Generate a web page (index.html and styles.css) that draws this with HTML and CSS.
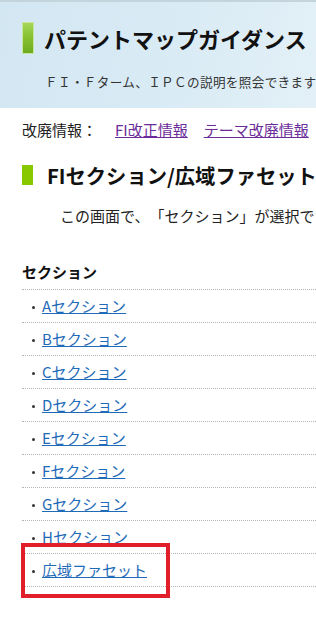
FILE: index.html
```html
<!DOCTYPE html>
<html lang="ja">
<head>
<meta charset="utf-8">
<title>パテントマップガイダンス</title>
<link rel="stylesheet" href="styles.css">
</head>
<body>
<header class="hdr">
  <div class="hdr-title">
    <span class="hdr-icon"></span>
    <h1>パテントマップガイダンス</h1>
  </div>
  <p class="hdr-sub">ＦＩ・Ｆターム、ＩＰＣの説明を照会できます</p>
</header>
<main class="content">
  <p class="info">改廃情報：<a class="visited" href="#">FI改正情報</a><a class="visited" href="#">テーマ改廃情報</a></p>
  <h2 class="heading"><span class="heading-bar"></span>FIセクション/広域ファセット</h2>
  <p class="lead">この画面で、「セクション」が選択できます。</p>
  <h3 class="label">セクション</h3>
  <ul class="list">
    <li><a href="#">Aセクション</a></li>
    <li><a href="#">Bセクション</a></li>
    <li><a href="#">Cセクション</a></li>
    <li><a href="#">Dセクション</a></li>
    <li><a href="#">Eセクション</a></li>
    <li><a href="#">Fセクション</a></li>
    <li><a href="#">Gセクション</a></li>
    <li><a href="#">Hセクション</a></li>
    <li class="marked"><a href="#">広域ファセット</a><span class="mark"></span></li>
  </ul>
</main>
</body>
</html>
```

FILE: styles.css
```css
html {
  margin: 0;
  padding: 0;
  overflow: hidden;
  background: #fff;
}
body {
  margin: 0;
  padding: 0;
  min-height: 618px;
  font-family: "Noto Sans CJK JP", "Noto Sans", sans-serif;
  color: #222;
  width: 316px;
  text-spacing-trim: space-all;
}
.hdr {
  height: 108px;
  box-sizing: border-box;
  border-top: 2px solid #c4d4dd;
  background: linear-gradient(100deg, #d3e7f2 0%, #d9ebf5 55%, #e3f0f7 100%);
  padding: 20px 0 0 22px;
  white-space: nowrap;
}
.hdr-title {
  display: flex;
  align-items: center;
  gap: 10px;
  height: 32px;
}
.hdr-icon {
  flex: none;
  width: 10px;
  height: 30px;
  border: 1px solid #c9e79a;
  background: linear-gradient(180deg, #a6d65a 0%, #86c232 45%, #6eab1f 100%);
}
.hdr-title h1 {
  margin: 0;
  font-size: 22px;
  line-height: 32px;
  font-weight: 700;
  color: #111;
}
.hdr-sub {
  margin: 18px 0 0 23px;
  font-size: 12.6px;
  line-height: 20px;
  letter-spacing: 0.35px;
  color: #333;
}
.content {
  padding: 0 0 0 22px;
  white-space: nowrap;
}
.info {
  margin: 11px 0 0 0;
  font-size: 15px;
  line-height: 22px;
  color: #222;
}
.info a {
  margin-left: 16px;
}
.info a:first-child {
  margin-left: 18px;
}
.visited {
  color: #6b2c99;
}
.heading {
  margin: 21px 0 0 0;
  display: flex;
  align-items: center;
  gap: 14px;
  font-size: 20.3px;
  line-height: 26px;
  font-weight: 700;
  color: #111;
}
.heading-bar {
  flex: none;
  width: 11px;
  height: 20px;
  background: #88c800;
}
.lead {
  margin: 17px 0 0 38px;
  font-size: 15px;
  line-height: 22px;
  color: #222;
}
.label {
  margin: 34px 0 0 0;
  font-size: 15px;
  line-height: 22px;
  font-weight: 700;
  color: #111;
}
.list {
  list-style: none;
  margin: 6px 0 0 0;
  padding: 0;
  border-top: 1px dotted #b5b5b5;
}
.list li {
  display: flex;
  align-items: center;
  height: 32px;
  border-bottom: 1px dotted #b5b5b5;
  font-size: 15px;
}
.list li::before {
  content: "";
  flex: none;
  width: 3px;
  height: 3px;
  border-radius: 50%;
  background: #333;
  margin: 2px 7px 0 10px;
}
.list a {
  color: #1f6bb8;
  text-decoration: underline;
  line-height: 20px;
}
.marked {
  position: relative;
}
.mark {
  position: absolute;
  top: -11px;
  left: -1px;
  width: 149px;
  height: 55px;
  box-sizing: border-box;
  border: 4px solid #e01f2a;
  pointer-events: none;
}
```
